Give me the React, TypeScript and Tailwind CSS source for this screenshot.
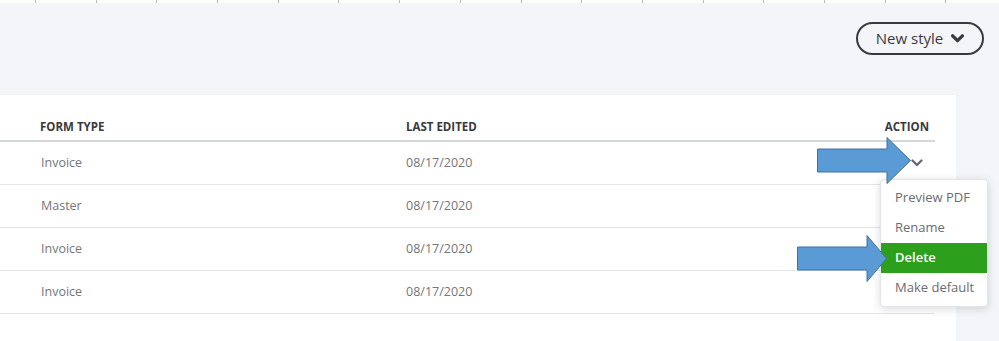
import React from 'react';

const rows = [
  { type: 'Invoice', edited: '08/17/2020' },
  { type: 'Master', edited: '08/17/2020' },
  { type: 'Invoice', edited: '08/17/2020' },
  { type: 'Invoice', edited: '08/17/2020' },
];

function Chevron({ className, weight = 2.4 }: { className?: string; weight?: number }) {
  return (
    <svg viewBox="0 0 12 8" className={className} fill="none" stroke="currentColor" strokeWidth={weight} strokeLinecap="round" strokeLinejoin="round">
      <path d="M1.5 1.5 L6 6 L10.5 1.5" />
    </svg>
  );
}

// callout arrow drawn over the screenshot
function BlueArrow({ width, headBase }: { width: number; headBase: number }) {
  const h = 47;
  return (
    <svg width={width} height={h} viewBox={`0 0 ${width} ${h}`}>
      <polygon
        points={`0.5,12 ${headBase},12 ${headBase},0.5 ${width - 0.5},23.5 ${headBase},46.5 ${headBase},35 0.5,35`}
        fill="#5b9bd5"
        stroke="#41719c"
        strokeWidth="1"
      />
    </svg>
  );
}

export default function App() {
  return (
    <div className="relative w-[999px] h-[341px] overflow-hidden bg-[#f4f5f8] font-['Open_Sans',sans-serif]">
      {/* ruler ticks */}
      <div className="flex h-[3px] bg-white pl-[35px]">
        {Array.from({ length: 16 }).map((_, i) => (
          <div key={i} className="w-[60.7px] shrink-0 border-l border-[#b8b8b8]" />
        ))}
      </div>

      {/* toolbar */}
      <div className="flex h-[92px] justify-end pr-[15px] pt-[19px]">
        <button className="flex h-[33px] w-[128px] items-center justify-center gap-[8px] rounded-full border-2 border-[#393a3d] text-[15px] text-[#393a3d]">
          <span>New style</span>
          <Chevron className="w-[13px] h-[9px]" weight={3} />
        </button>
      </div>

      {/* table panel */}
      <div className="w-[956px] h-[246px] bg-white">
        <div className="w-[935px]">
          <div className="flex h-[47px] items-end border-b-2 border-[#d4d7dc] pb-[5px] text-[11.5px] font-bold text-[#393a3d]">
            <div className="w-[406px] pl-[40px]">FORM TYPE</div>
            <div className="flex-1">LAST EDITED</div>
            <div className="pr-[6px]">ACTION</div>
          </div>
          {rows.map((r, i) => (
            <div key={i} className="flex h-[43px] items-center border-b border-[#e3e5e8] text-[12.5px] text-[#74767b]">
              <div className="w-[406px] pl-[41px]">{r.type}</div>
              <div className="flex-1">{r.edited}</div>
              <div className="flex w-[40px] justify-end pr-[12px]">
                {i === 0 && <Chevron className="w-[12px] h-[8px] text-[#6b6c72]" />}
              </div>
            </div>
          ))}
        </div>
      </div>

      {/* action dropdown */}
      <div className="absolute left-[880px] top-[179px] w-[108px] rounded-[4px] border border-[#e3e5e8] bg-white py-[3px] text-[13px] text-[#6b6c72] shadow-[0_2px_8px_rgba(0,0,0,0.15)]">
        <div className="flex h-[30px] items-center pl-[14px]">Preview PDF</div>
        <div className="flex h-[30px] items-center pl-[14px]">Rename</div>
        <div className="flex h-[30px] items-center bg-[#2ca01c] pl-[14px] font-semibold text-white">Delete</div>
        <div className="flex h-[30px] items-center pl-[14px]">Make default</div>
      </div>

      <div className="absolute left-[817px] top-[137px]">
        <BlueArrow width={94} headBase={70} />
      </div>
      <div className="absolute left-[797px] top-[235px]">
        <BlueArrow width={90} headBase={70} />
      </div>
    </div>
  );
}
